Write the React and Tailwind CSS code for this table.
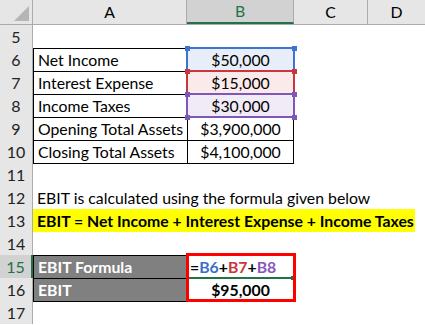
import React from 'react';

const FONT = "font-['Lato',sans-serif]";

function RowHead({ n, selected }) {
  return (
    <div
      className={`w-[33px] shrink-0 flex items-center justify-center text-[16px] ${
        selected
          ? 'bg-[#d2d2d2] text-[#217346] border-r-2 border-[#217346]'
          : 'bg-[#e6e6e6] text-[#222] border-r border-[#ababab]'
      }`}
    >
      {n}
    </div>
  );
}

function Row({ n, selected, children }) {
  return (
    <div className="flex h-[23px]">
      <RowHead n={n} selected={selected} />
      {children}
    </div>
  );
}

function Blank({ w }) {
  return <div className={`${w} shrink-0`} />;
}

const Rest = () => (
  <>
    <Blank w="w-[74px]" />
    <Blank w="w-[57px]" />
  </>
);

const labelCell =
  'w-[154px] shrink-0 flex items-center pl-[4px] border-t border-l border-black whitespace-nowrap';
const valueCell =
  'w-[107px] shrink-0 flex items-center justify-center border-t border-l border-r border-black';

function Handle({ className }) {
  return <div className={`absolute w-[5px] h-[5px] ${className}`} />;
}

export default function App() {
  return (
    <div className={`relative w-[425px] h-[325px] bg-white overflow-hidden text-[15.8px] text-black ${FONT}`}>
      {/* Column headers */}
      <div className="flex h-[25px] bg-[#e6e6e6] border-b border-[#ababab]">
        <div className="w-[33px] shrink-0 relative border-r border-[#ababab]">
          <div className="absolute right-[3px] bottom-[3px] w-0 h-0 border-l-[15px] border-l-transparent border-b-[15px] border-b-[#b5b5b5]" />
        </div>
        <div className="w-[154px] shrink-0 flex items-center justify-center border-r border-[#ababab]">A</div>
        <div className="w-[107px] shrink-0 flex items-center justify-center bg-[#d2d2d2] text-[#217346] border-b-2 border-[#217346] border-r border-r-[#ababab]">
          B
        </div>
        <div className="w-[74px] shrink-0 flex items-center justify-center border-r border-[#ababab]">C</div>
        <div className="w-[57px] shrink-0 flex items-center justify-center">D</div>
      </div>

      <Row n={5}>
        <Blank w="w-[154px]" />
        <Blank w="w-[107px]" />
        <Rest />
      </Row>
      <Row n={6}>
        <div className={labelCell}>Net Income</div>
        <div className="w-[107px] shrink-0 flex items-center justify-center bg-[#e8eef9]">$50,000</div>
        <Rest />
      </Row>
      <Row n={7}>
        <div className={labelCell}>Interest Expense</div>
        <div className="w-[107px] shrink-0 flex items-center justify-center bg-[#fbeaea]">$15,000</div>
        <Rest />
      </Row>
      <Row n={8}>
        <div className={labelCell}>Income Taxes</div>
        <div className="w-[107px] shrink-0 flex items-center justify-center bg-[#f0ebf7]">$30,000</div>
        <Rest />
      </Row>
      <Row n={9}>
        <div className={labelCell}>Opening Total Assets</div>
        <div className={valueCell}>$3,900,000</div>
        <Rest />
      </Row>
      <Row n={10}>
        <div className={labelCell}>Closing Total Assets</div>
        <div className={valueCell}>$4,100,000</div>
        <Rest />
      </Row>
      <Row n={11}>
        <div className="w-[154px] shrink-0 border-t border-black" />
        <div className="w-[107px] shrink-0 border-t border-black" />
        <Rest />
      </Row>
      <Row n={12}>
        <div className="flex-1 flex items-center pl-[4px] whitespace-nowrap">
          EBIT is calculated using the formula given below
        </div>
      </Row>
      <Row n={13}>
        <div className="w-[382px] shrink-0 flex items-center pl-[4px] bg-[#ffff00] font-bold whitespace-nowrap">
          EBIT = Net Income + Interest Expense + Income Taxes
        </div>
      </Row>
      <Row n={14}>
        <Blank w="w-[154px]" />
      </Row>
      <Row n={15} selected>
        <div className="w-[154px] shrink-0 flex items-center pl-[4px] bg-[#808080] text-white font-bold border-t border-l border-black">
          EBIT Formula
        </div>
        <div className="w-[107px] shrink-0 flex items-center pl-[3px] font-bold border-t border-black">
          <span>=</span>
          <span className="text-[#3a70cc]">B6</span>
          <span>+</span>
          <span className="text-[#c8373c]">B7</span>
          <span>+</span>
          <span className="text-[#8659bd]">B8</span>
        </div>
        <Rest />
      </Row>
      <Row n={16}>
        <div className="w-[154px] shrink-0 flex items-center pl-[4px] bg-[#808080] text-white font-bold border-t border-l border-black">
          EBIT
        </div>
        <div className="w-[107px] shrink-0 flex items-center justify-center font-bold border-t border-black">
          $95,000
        </div>
        <Rest />
      </Row>
      <Row n={17}>
        <div className="w-[154px] shrink-0 border-t border-black" />
        <Blank w="w-[107px]" />
        <Rest />
      </Row>

      {/* Formula reference highlights */}
      <div className="absolute left-[186px] top-[47px] w-[109px] h-[25px] border-2 border-[#3c74d4]" />
      <div className="absolute left-[186px] top-[70px] w-[109px] h-[25px] border-2 border-[#c8363f]" />
      <div className="absolute left-[186px] top-[93px] w-[109px] h-[25px] border-2 border-[#7f56b9]" />
      <Handle className="left-[185px] top-[46px] bg-[#3c74d4]" />
      <Handle className="left-[292px] top-[46px] bg-[#3c74d4]" />
      <Handle className="left-[185px] top-[69px] bg-[#c8363f]" />
      <Handle className="left-[292px] top-[69px] bg-[#c8363f]" />
      <Handle className="left-[185px] top-[92px] bg-[#7f56b9]" />
      <Handle className="left-[292px] top-[92px] bg-[#7f56b9]" />
      <Handle className="left-[185px] top-[115px] bg-[#7f56b9]" />
      <Handle className="left-[292px] top-[115px] bg-[#7f56b9]" />

      {/* Active cell underline */}
      <div className="absolute left-[188px] top-[277px] w-[104px] h-[2px] bg-[#217346]" />
      <div className="absolute left-[291px] top-[276px] w-[4px] h-[4px] bg-[#217346]" />

      {/* Red highlight box */}
      <div className="absolute left-[186px] top-[253px] w-[110px] h-[49px] border-[3px] border-[#ff0000]" />
    </div>
  );
}
